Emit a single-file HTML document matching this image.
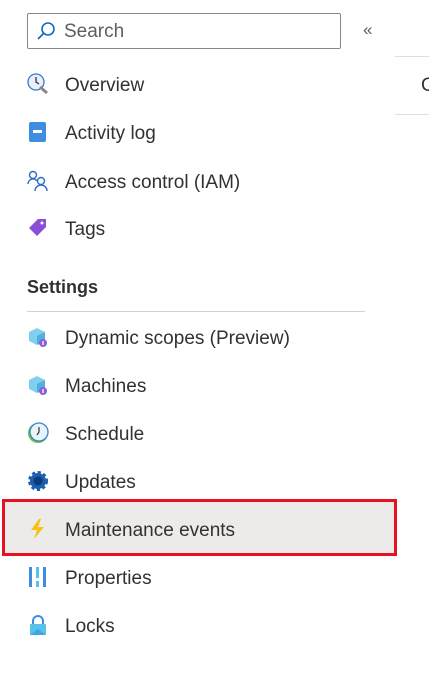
<!DOCTYPE html><html><head><style>
body{margin:0;width:429px;height:677px;background:#fff;font-family:"Liberation Sans",sans-serif;color:#323130;position:relative;overflow:hidden}
.a{position:absolute}
.t{position:absolute;left:65px;font-size:19px;line-height:24px;white-space:nowrap;margin-top:2px}
.i{position:absolute;left:27px;width:22px;height:22px}
</style></head><body>
<div class="a" style="left:27px;top:13px;width:312px;height:34px;border:1px solid #8a8886;border-radius:2px"></div>
<svg class="a" style="left:35px;top:20px" width="22" height="22" viewBox="0 0 22 22"><circle cx="13" cy="9" r="6" fill="none" stroke="#0f6cbd" stroke-width="1.6"/><line x1="8.5" y1="13.5" x2="3" y2="19" stroke="#0f6cbd" stroke-width="1.8"/></svg>
<div class="t" style="left:64px;top:18px;color:#605e5c">Search</div>
<div class="a" style="left:363px;top:20px;font-size:17px;color:#605e5c">«</div>
<div class="a" style="left:395px;top:56px;width:34px;height:1px;background:#e1dfdd"></div>
<div class="a" style="left:421px;top:75px;font-size:19px">C</div>
<div class="a" style="left:395px;top:114px;width:34px;height:1px;background:#e1dfdd"></div>

<svg class="i" style="top:73px" viewBox="0 0 22 22"><circle cx="9" cy="9" r="8" fill="#e8f1fb" stroke="#3a78c9" stroke-width="1.3"/><path d="M9 4v5l3 2" stroke="#333" fill="none" stroke-width="1.3"/><path d="M13 14l7 6" stroke="#888" stroke-width="3"/></svg>
<div class="t" style="top:72px">Overview</div>
<svg class="i" style="top:121px" viewBox="0 0 22 22"><rect x="2" y="1" width="17" height="20" rx="2" fill="#3d8ee0"/><rect x="6" y="9" width="9" height="3" fill="#fff"/></svg>
<div class="t" style="top:120px">Activity log</div>
<svg class="i" style="top:170px" viewBox="0 0 22 22"><circle cx="6" cy="5" r="3.5" fill="none" stroke="#2b6cc4" stroke-width="1.4"/><path d="M1 14a5 5 0 0 1 9 -3" fill="none" stroke="#2b6cc4" stroke-width="1.4"/><circle cx="14" cy="11" r="3.5" fill="none" stroke="#2b6cc4" stroke-width="1.4"/><path d="M8 21a6 6 0 0 1 12 0" fill="none" stroke="#2b6cc4" stroke-width="1.4"/></svg>
<div class="t" style="top:169px">Access control (IAM)</div>
<svg class="i" style="top:217px" viewBox="0 0 22 22"><path d="M2 11L11 2h8v8l-9 9z" fill="#8a4fd6"/><circle cx="15" cy="6" r="1.5" fill="#fff"/></svg>
<div class="t" style="top:216px">Tags</div>

<div class="a" style="left:27px;top:277px;font-size:18px;font-weight:bold;color:#323130">Settings</div>
<div class="a" style="left:27px;top:311px;width:338px;height:1px;background:#d2d0ce"></div>

<svg class="i" style="top:326px" viewBox="0 0 22 22"><path d="M2 6l8-4 8 4v9l-8 4-8-4z" fill="#7fd0f0"/><path d="M10 10l8-4v9l-8 4z" fill="#4fb0e0"/><circle cx="16" cy="17" r="4" fill="#8a5fd6"/><path d="M16 15v4" stroke="#fff" stroke-width="1.3"/></svg>
<div class="t" style="top:325px">Dynamic scopes (Preview)</div>
<svg class="i" style="top:374px" viewBox="0 0 22 22"><path d="M2 6l8-4 8 4v9l-8 4-8-4z" fill="#7fd0f0"/><path d="M10 10l8-4v9l-8 4z" fill="#4fb0e0"/><circle cx="16" cy="17" r="4" fill="#8a5fd6"/><path d="M16 15v4" stroke="#fff" stroke-width="1.3"/></svg>
<div class="t" style="top:373px">Machines</div>
<svg class="i" style="top:422px" viewBox="0 0 22 22"><circle cx="11" cy="11" r="10" fill="#6bbd45"/><circle cx="12" cy="10" r="9" fill="#e8f3fb" stroke="#3a86d0" stroke-width="1.3"/><path d="M12 5v5l-2 3" stroke="#333" fill="none" stroke-width="1.2"/></svg>
<div class="t" style="top:421px">Schedule</div>
<svg class="i" style="top:470px" viewBox="0 0 22 22"><circle cx="11" cy="11" r="8" fill="#1b5fb0" stroke="#1b5fb0" stroke-width="4" stroke-dasharray="3 2.3"/><circle cx="11" cy="11" r="4.5" fill="#0b3a78"/></svg>
<div class="t" style="top:469px">Updates</div>

<div class="a" style="left:2px;top:499px;width:389px;height:51px;border:3px solid #e81123;background:#edebe9"></div>
<svg class="i" style="top:518px" viewBox="0 0 22 22"><path d="M12 1L4 12h6l-3 9 10-12h-6l3-8z" fill="#f6c015"/></svg>
<div class="t" style="top:517px">Maintenance events</div>

<svg class="i" style="top:566px" viewBox="0 0 22 22"><rect x="2" y="1" width="3" height="20" fill="#3d8ee0"/><rect x="9" y="1" width="3" height="20" fill="#58c2ee"/><rect x="16" y="1" width="3" height="20" fill="#3d8ee0"/><rect x="9" y="12" width="3" height="3" fill="#fff"/></svg>
<div class="t" style="top:565px">Properties</div>
<svg class="i" style="top:614px" viewBox="0 0 22 22"><path d="M6 10V7a5 5 0 0 1 10 0v3" fill="none" stroke="#3d8ee0" stroke-width="2"/><rect x="3" y="10" width="16" height="11" rx="1" fill="#58c2ee"/><path d="M3 21l8-6 8 6" fill="#3da8e0"/></svg>
<div class="t" style="top:613px">Locks</div>
</body></html>
